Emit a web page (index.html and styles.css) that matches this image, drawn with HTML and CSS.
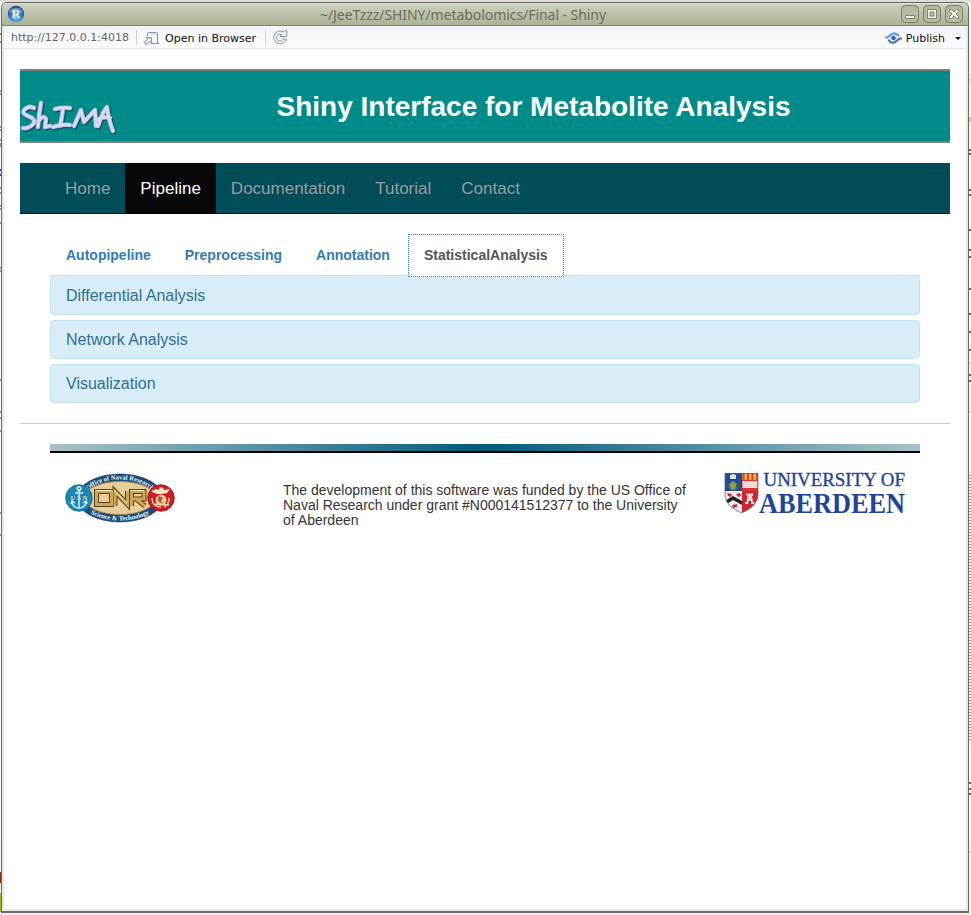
FILE: index.html
```html
<!DOCTYPE html>
<html lang="en">
<head>
<meta charset="utf-8">
<title>~/JeeTzzz/SHINY/metabolomics/Final - Shiny</title>
<link rel="stylesheet" href="styles.css">
</head>
<body>
<svg class="desktop" width="971" height="915" aria-hidden="true">
  <rect width="971" height="915" fill="#f3f2f1"/>
  <path d="M0 0h971v2H0z" fill="#dcdcda"/>
  <path d="M0 50h2v787H0z" fill="#fff"/>
  <path d="M968 144h3v200h-3zM968 412h3v60h-3zM968 745h3v95h-3z" fill="#fff"/>
  <path d="M0 34h1M0 42h1M0 91h1M0 94h1M0 127h1M0 130h1M0 140h1M0 144h1M0 146h1M0 188h1M0 193h1M0 206h1M0 209h1M0 223h1M0 268h1M0 271h1M0 380h1M0 412h1M0 418h1M0 431h1M0 513h1M0 535h1" stroke="#222"/>
  <path d="M0 170h1M0 175h1" stroke="#33d" stroke-width="2"/>
  <path d="M969 150h2M969 154h2M969 190h2M969 195h2M969 230h2M969 250h2M969 257h2M969 289h2M969 314h2M969 332h2M969 350h2M969 375h2M969 381h2M969 783h2M969 789h2M969 794h2" stroke="#333" stroke-width="1.500"/>
  <path d="M968 80h3M968 363h3M968 412h3M968 852h3" stroke="#bbb"/>
  <path d="M970 475v267" stroke="#999" stroke-width="3" stroke-dasharray="1 2"/>
  <path d="M968 117h3v5h-3z" fill="#e8c94a"/>
  <path d="M0 872h1v11H0z" fill="#8a2f19"/>
  <path d="M0 893h1v19H0z" fill="#9ab81d"/>
</svg>
<div class="window">
  <header class="titlebar">
    <svg class="app-icon" width="18" height="18" viewBox="0 0 18 18">
      <defs><radialGradient id="orb" cx=".5" cy=".75" r=".7"><stop offset="0" stop-color="#6cc0f5"/><stop offset=".6" stop-color="#2a6fc4"/><stop offset="1" stop-color="#1b4c9c"/></radialGradient></defs>
      <circle cx="9" cy="9" r="8.2" fill="url(#orb)"/>
      <path d="M2 7a7.3 6 0 0 1 14 0q-7 3-14 0z" fill="#9cc0e8" opacity=".55"/>
      <text x="9" y="13" text-anchor="middle" class="orb-letter">R</text>
    </svg>
    <h1 class="window-title">~/JeeTzzz/SHINY/metabolomics/Final - Shiny</h1>
    <div class="window-buttons">
      <svg width="18" height="18" viewBox="0 0 18 18"><rect x=".5" y=".5" width="17" height="17" rx="4" class="wb"/><path d="M4.500 10.500h9v3h-9z" class="glyph"/></svg>
      <svg width="18" height="18" viewBox="0 0 18 18"><rect x=".5" y=".5" width="17" height="17" rx="4" class="wb"/><path d="M4.500 4.500h9v9h-9zM7 7h4v4h-4z" class="glyph" fill-rule="evenodd"/></svg>
      <svg width="18" height="18" viewBox="0 0 18 18"><rect x=".5" y=".5" width="17" height="17" rx="4" class="wb"/><path d="M4.500 4.500h2l2.500 2.500 2.500-2.500h2v2L11 9l2.500 2.500v2h-2L9 11l-2.500 2.500h-2v-2L7 9 4.500 6.500z" class="glyph"/></svg>
    </div>
  </header>
  <div class="toolbar">
    <span class="url">http://127.0.0.1:4018</span>
    <i class="sep"></i>
    <svg class="open-icon" width="17" height="13" viewBox="0 0 17 13" fill="none" stroke="#8794a8"><path d="M4.500 4V1.500q0-1 1-1h8q1 0 1 1V10q0 1.500 1.500 1.500H8" fill="#f7f9fc"/><path d="M6 2h7" stroke="#bfcbe0"/><path d="M1 10.500l3.500-3.500L3 5.500h5.500V11L7 9.500 4 12.500z" fill="#dce5f3"/></svg>
    <span class="open">Open in Browser</span>
    <i class="sep second"></i>
    <svg class="reload" width="16" height="16" viewBox="0 0 16 16" fill="none"><path d="M11.500 2.800A6.500 6.500 0 1 0 14.500 10H11.300A3.500 3.500 0 1 1 9.500 5.500L8 7.500H14.800V.800z" fill="#edf1f7" stroke="#8c97a9"/></svg>
    <svg class="publish-icon" width="17" height="14" viewBox="0 0 17 14" fill="none" stroke-width="2.200"><path d="M0 6.500h1.500Q3.500 6.500 5 4.500 8 1 11.500 3 13 4 13.500 5.500" stroke="#6799df"/><path d="M17 7.500h-1.500Q13.500 7.500 12 9.500 9 13 5.500 11 4 10 3.500 8.500" stroke="#4776bd"/><circle cx="8.500" cy="7" r="2.300" fill="#2666cd"/></svg>
    <span class="publish">Publish</span>
    <i class="caret"></i>
  </div>
  <main class="page">
    <section class="banner">
      <svg class="shima" width="98" height="36" viewBox="0 0 98 36" role="img" aria-label="ShIMA" fill="none" stroke-linecap="round" stroke-linejoin="round">
        <defs><g id="script"><path d="M14 8Q9 5 4 10 2 13 6 15L12 18Q17 22 11 26 7 29 3 28"/><path d="M21 3Q19 14 18 27M18 22Q23 14 26 19L25 27 30 26"/><path d="M35 9Q43 7 50 8M43 9Q42 18 40 26M33 27Q42 24 50 25"/><path d="M54 26L61 10 64 22 75 10 76 26"/><path d="M78 26Q83 11 87 7 88 18 93 31M76 20Q84 16 90 18"/></g></defs>
        <use href="#script" stroke="#164c64" stroke-width="4.500" transform="translate(1.200 1.200)"/>
        <use href="#script" stroke="#b0b6d8" stroke-width="4.500"/>
        <use href="#script" stroke="#d6dcf0" stroke-width="2.800"/>
      </svg>
      <h2>Shiny Interface for Metabolite Analysis</h2>
    </section>
    <nav class="navbar"><a>Home</a><a class="active">Pipeline</a><a>Documentation</a><a>Tutorial</a><a>Contact</a></nav>
    <div class="content">
      <div class="tabs"><a>Autopipeline</a><a>Preprocessing</a><a>Annotation</a><a class="active">StatisticalAnalysis</a></div>
      <div class="panels"><div class="panel">Differential Analysis</div><div class="panel">Network Analysis</div><div class="panel">Visualization</div></div>
    </div>
    <hr>
    <footer>
      <div class="rule"></div>
      <div class="credits">
        <svg class="onr" width="110" height="50" viewBox="0 0 110 50">
          <defs><path id="arc-top" d="M20 21.500C31 1.500 79 1.500 90 21.500"/><path id="arc-bottom" d="M17 32C28 52.500 82 52.500 93 32"/></defs>
          <ellipse cx="55" cy="25" rx="43" ry="24" fill="#194c7e" stroke="#0d3158" stroke-width=".6"/>
          <ellipse cx="55" cy="25" rx="35.500" ry="16.500" fill="#e9cd98" stroke="#a98f5a"/>
          <text class="seal"><textPath href="#arc-top" startOffset="50%" text-anchor="middle">Office of Naval Research</textPath></text>
          <text class="seal"><textPath href="#arc-bottom" startOffset="50%" text-anchor="middle">Science &amp; Technology</textPath></text>
          <g fill="none"><path d="M31.500 18.500H46.500V31.500H31.500zM50 33V18.500L62.500 31.500V18M66.500 33V18.500H79V26H67M71 26L80 33" stroke="#54401d" stroke-width="5"/><path d="M31.500 18.500H46.500V31.500H31.500zM50 33V18.500L62.500 31.500V18M66.500 33V18.500H79V26H67M71 26L80 33" stroke="#d0a853" stroke-width="3"/><path d="M30.500 17.500H47M49 17.500L62 30M66 17.500H79" stroke="#fff3c4"/></g>
          <circle cx="14" cy="25" r="13.300" fill="#1a86ba" stroke="#115e8a" stroke-width=".8"/>
          <g fill="none" stroke="#d5edf5" stroke-width="1.500"><circle cx="14" cy="15.500" r="1.800"/><path d="M14 17v18M10 20h8M7 29q1 6 7 6t7-6M6 31l1-3 3 2M22 31l-1-3-3 2"/></g>
          <text x="14" y="27" text-anchor="middle" textLength="17" class="usn">USN</text>
          <circle cx="96" cy="25" r="13.300" fill="#cb1c28" stroke="#981520" stroke-width=".8"/>
          <path d="M86 18l5-2 3 1 1-3 3 1 1 2 6-1-3 4-5 1h-4l-4-1z" fill="#f7e6c5"/><circle cx="96" cy="27" r="5.500" fill="#ecc791"/><path d="M94 23l4 2-2 3 2 3-4-2-1-3z" fill="#b14c36"/><path d="M87 25q0 9 9 9M88 31l16 1M104 25q0 7-5 9" fill="none" stroke="#f3d7a6" stroke-width="1.400"/>
        </svg>
        <p>The development of this software was funded by the US Office of Naval Research under grant #N000141512377 to the University of Aberdeen</p>
        <svg class="aberdeen" width="181" height="42" viewBox="0 0 181 42">
          <defs><clipPath id="shield"><path d="M1 0H34V22Q34 33 17.500 40Q1 33 1 22z"/></clipPath></defs>
          <g clip-path="url(#shield)"><path d="M0 0h18v18H0z" fill="#234b91"/><path d="M18 0h17v18H18z" fill="#f2bd46"/><path d="M19.500 0v18M24 0v18M28.500 0v18M33 0v18" stroke="#d9432f" stroke-width="2.200"/><path d="M18 7h17v11H18z" fill="#d2363b"/><path d="M0 18h18v24H0z" fill="#eeeef0"/><path d="M18 18h17v24H18z" fill="#d2232f"/>
          <path d="M6 2l3-1 3 1v4H6z" fill="#dde5e4"/><path d="M9 8l4 3-2 6H7l-2-6zM3 13l3 3M15 13l-3 3" fill="#9b9a55" stroke="#3f7966"/><path d="M1 28l8-5 9 5v4l-9-5-8 5z" fill="#1d2024"/><path d="M3 20l5 1-1 3-3-1zM12 21l4-1 1 3-3 1zM8 32l5-1v3l-4 1z" fill="#c92f39"/><path d="M21 31V29h1.500l1-6h-1v-3h1.500v1h1v-1h1.500v1h1v-1H29v3h-1l1 6h1.500v2z" fill="#dcd6d9"/><path d="M24.500 31v-3h2.500v3z" fill="#6b3640"/><path d="M18.500 8H33.500v7h-15z" fill="#efd9d4"/></g>
          <path d="M1 .5H34V22Q34 33 17.500 40Q1 33 1 22z" fill="none" stroke="#525a75" stroke-width=".7"/>
          <text x="39.500" y="13" class="univ" textLength="141.500" lengthAdjust="spacingAndGlyphs">UNIVERSITY OF</text>
          <text x="35" y="40" class="aber" textLength="146" lengthAdjust="spacingAndGlyphs">ABERDEEN</text>
        </svg>
      </div>
    </footer>
  </main>
</div>
</body>
</html>
```
FILE: styles.css
```css
* { box-sizing: border-box; }
body { margin: 0; width: 971px; height: 915px; overflow: hidden; position: relative; padding: 2px 2px 3px 1px; font-family: "Liberation Sans", Arial, sans-serif; }
.desktop { position: absolute; left: 0; top: 0; z-index: -1; }
.window { width: 968px; height: 911px; border: 1px solid #6b6b69; border-top-color: #62675a; border-bottom-width: 2px; border-radius: 6px 6px 0 0; background: #e8e7e5; overflow: hidden; padding: 0 2px 2px; }
.titlebar { height: 23px; margin: 0 -2px; padding: 0 5px 1px 5px; display: flex; align-items: center; background: linear-gradient(#ccd2bf, #bac1a8 55%, #aab395); border-top: 1px solid #dde2d3; border-bottom: 1px solid #7d8670; }
.app-icon { flex: none; }
.orb-letter { font: bold 12px "Liberation Serif", serif; fill: #fff; }
.window-title { flex: 1; margin: 1px 0 0; padding-left: 295px; font: 14px/20px "Noto Sans", sans-serif; letter-spacing: -.06px; color: #696e60; }
.window-buttons { display: flex; gap: 4px; }
.wb { fill: #b4bca0; stroke: #747c64; }
.glyph { fill: #eceee3; stroke: #7e866d; }
.toolbar { height: 23px; display: flex; align-items: center; padding: 0 5px 0 7px; background: linear-gradient(#f1f3f6, #fbfbfc); border-bottom: 1px solid #e1e6e8; font: 11px/20px "DejaVu Sans", sans-serif; color: #111; }
.url { width: 118px; color: #666; white-space: nowrap; padding-top: 1px; }
.sep { width: 1px; height: 15px; margin: 0 7px; background: #cfd5d6; }
.open-icon { margin-top: 2px; margin-left: -1px; margin-right: 1px; }
.open { margin-left: 4px; width: 91px; white-space: nowrap; padding-top: 3px; }
.second { margin-right: 6px; margin-left: 9px; }
.publish-icon { margin-left: auto; margin-right: 4px; margin-top: 1px; }
.publish { padding-top: 3px; }
.caret { margin-left: 10px; margin-top: 2px; border: 3px solid transparent; border-top-color: #111; border-bottom: 0; }
.page { height: calc(100% - 46px); background: #fff; padding: 20px 16px 0; }
.banner { height: 74px; width: 930px; display: flex; background: #008b8b; border: solid #808080; border-width: 2px 0; position: relative; }
.shima { position: absolute; left: 0; top: 29px; }
.banner h2 { margin: 0; width: 100%; padding-left: 256.500px; font-size: 28px; line-height: 71px; color: #fff; white-space: nowrap; }
.navbar { margin-top: 20px; width: 930px; height: 51px; display: flex; padding-left: 30px; background: #004c58; border-bottom: 1px solid #080808; font-size: 17px; line-height: 51px; color: #9d9d9d; }
.navbar a { height: 50px; padding: 0 15px; }
.navbar .active { color: #fff; background: #080808; }
.content { margin: 20px 0 0 30px; width: 870px; }
.tabs { display: flex; height: 42px; font-size: 14px; font-weight: bold; line-height: 40px; color: #337ab7; border-bottom: 1px solid #ddd; }
.tabs a { height: 43px; padding: 1px 16px; margin-right: 2px; }
.tabs .active { position: relative; color: #555; background: #fff; border: 1px dotted #337ab7; padding: 0 15px; margin: 0; }
.panels { display: grid; gap: 5px; margin-top: -1px; }
.panel { height: 40px; padding-left: 15px; border: 1px solid #c2e3e9; border-radius: 4px; background: #d9edf7; font-size: 16px; line-height: 39px; color: #31708f; }
.panel + .panel { height: 39px; line-height: 37px; }
hr { width: 930px; margin: 20px 0; border: 0; border-top: 1px solid #ccc; }
footer { margin-left: 30px; width: 870px; }
.rule { height: 9px; border-bottom: 2px solid #000; background: linear-gradient(90deg, #a9c1c9, #005b79 50%, #a9c1c9); }
.credits { display: flex; padding: 20px 15px 0; align-items: flex-start; }
.credits p { width: 408px; margin: 10px 0 0 108px; font-size: 14px; line-height: 15px; color: #333; }
.aberdeen { margin-left: auto; overflow: visible; }
.seal { font: bold 6.500px "Liberation Serif", serif; fill: #f5f7f7; }
.usn { font: bold 7px "Liberation Serif", serif; fill: #e9d9a7; }
.univ { font: 18.500px "Liberation Serif", serif; fill: #21449b; stroke: #21449b; stroke-width: .35; }
.aber { font: bold 29px "Liberation Serif", serif; fill: #21449b; }
```
